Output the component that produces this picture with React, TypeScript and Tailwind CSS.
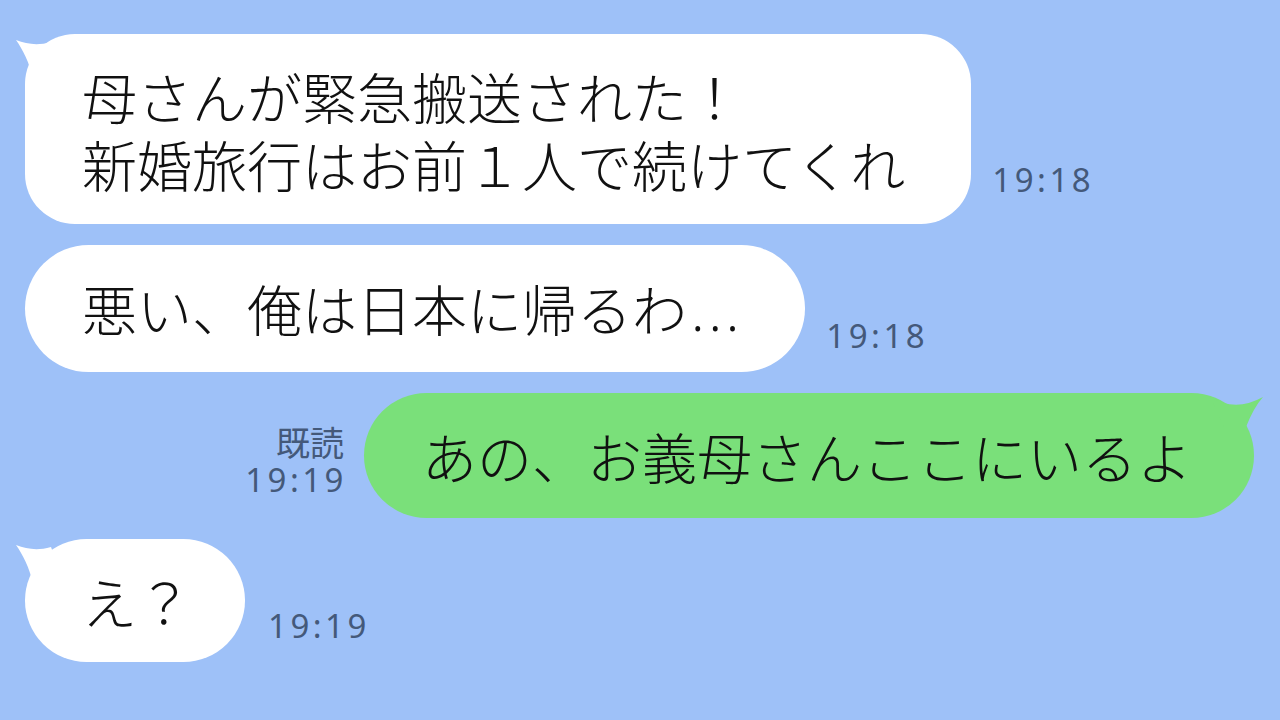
import React from 'react';

const jp = { fontFamily: '"Noto Sans CJK JP", "Noto Sans", sans-serif' };
const num = { fontFamily: '"Noto Sans", "Noto Sans CJK JP", sans-serif' };

function LeftTail() {
  return (
    <svg className="absolute left-[-10px] top-0" width="50" height="50" viewBox="0 0 50 50">
      <path d="M1 6 C 12 10, 22 12, 36 8 L 44 30 L 18 44 C 14 28, 8 16, 1 6 Z" fill="#ffffff" />
    </svg>
  );
}

function RightTail() {
  return (
    <svg className="absolute right-[-10px] top-0" width="60" height="50" viewBox="0 0 60 50">
      <path d="M6 3 Q 30 20 59 4 Q 50 14 42 34 L 20 34 Z" fill="#7ae07a" />
    </svg>
  );
}

function Time({ children, className = '' }: { children: React.ReactNode; className?: string }) {
  return (
    <div className={`text-[33px] leading-[36px] tracking-[3.5px] font-normal text-[#44597a] ${className}`} style={num}>
      {children}
    </div>
  );
}

export default function App() {
  return (
    <div className="w-[1280px] h-[720px] overflow-hidden bg-[#9ec1f8] flex flex-col pt-[34px] gap-[21px] font-light" style={jp}>
      {/* received */}
      <div className="flex items-end gap-[21px] pl-[25px]">
        <div className="relative bg-white rounded-[50px] pl-[57px] pr-[66px] py-[27px] text-[55px] leading-[68px] text-[#111] whitespace-nowrap">
          <LeftTail />
          <div className="relative">母さんが緊急搬送された！</div>
          <div className="relative">新婚旅行はお前１人で続けてくれ</div>
        </div>
        <Time className="mb-[26px]">19:18</Time>
      </div>

      <div className="flex items-end gap-[21px] pl-[25px]">
        <div className="relative bg-white rounded-full pl-[57px] pr-[62px] py-[28px] text-[55px] leading-[68px] text-[#111] whitespace-nowrap">
          悪い、俺は日本に帰るわ<span className="ml-[4px] tracking-[4px]" style={num}>...</span>
        </div>
        <Time className="mb-[18px]">19:18</Time>
      </div>

      {/* sent */}
      <div className="flex items-end justify-end gap-[20px] pr-[26px]">
        <div className="flex flex-col items-end mb-[20px]">
          <div className="text-[34px] leading-[40px] font-normal text-[#44597a]" style={jp}>既読</div>
          <Time className="mr-[-3px]">19:19</Time>
        </div>
        <div className="relative bg-[#7ae07a] rounded-full pl-[58px] pr-[62px] py-[28px] text-[55px] leading-[69px] text-[#111] whitespace-nowrap">
          <RightTail />
          <span className="relative">あの、お義母さんここにいるよ</span>
        </div>
      </div>

      <div className="flex items-end gap-[23px] pl-[25px]">
        <div className="relative bg-white rounded-full pl-[57px] pr-[53px] py-[27px] text-[55px] leading-[69px] text-[#111] whitespace-nowrap">
          <LeftTail />
          <span className="relative">え？</span>
        </div>
        <Time className="mb-[18px]">19:19</Time>
      </div>
    </div>
  );
}
